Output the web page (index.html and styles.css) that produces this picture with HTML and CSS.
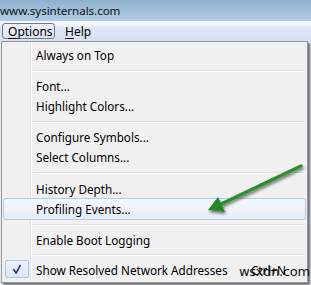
FILE: index.html
```html
<!DOCTYPE html>
<html>
<head>
<meta charset="utf-8">
<link rel="stylesheet" href="styles.css">
</head>
<body>
<div class="window">
  <div class="titlebar"><span class="title">www.sysinternals.com</span></div>
  <div class="menubar">
    <span class="menu-btn open"><u>O</u>ptions</span>
    <span class="menu-btn"><u>H</u>elp</span>
  </div>
  <div class="dropdown">
    <div class="item">Always on Top</div>
    <div class="sep"></div>
    <div class="item">Font...</div>
    <div class="item">Highlight Colors...</div>
    <div class="sep"></div>
    <div class="item">Configure Symbols...</div>
    <div class="item">Select Columns...</div>
    <div class="sep"></div>
    <div class="item">History Depth...</div>
    <div class="item hot">Profiling Events...</div>
    <div class="sep"></div>
    <div class="item">Enable Boot Logging</div>
    <div class="sep last"></div>
    <div class="item checked">
      <span class="check"><svg width="24" height="17" viewBox="0 0 24 17"><path d="M8.5 8.5 L11 12.5 L15.5 4" fill="none" stroke="#1c2a78" stroke-width="1.6" stroke-linecap="round" stroke-linejoin="round"/></svg></span>
      <span class="label">Show Resolved Network Addresses</span>
      <span class="accel">Ctrl+N</span>
    </div>
  </div>
  <svg class="arrow" width="311" height="285" viewBox="0 0 311 285">
    <defs>
      <filter id="sh" x="-20%" y="-20%" width="140%" height="160%">
        <feGaussianBlur in="SourceAlpha" stdDeviation="1.5"/>
        <feOffset dx="1" dy="2" result="b"/>
        <feComponentTransfer><feFuncA type="linear" slope="0.55"/></feComponentTransfer>
        <feMerge><feMergeNode/><feMergeNode in="SourceGraphic"/></feMerge>
      </filter>
    </defs>
    <g filter="url(#sh)">
      <line x1="301" y1="166" x2="219" y2="205" stroke="#2d8f2d" stroke-width="3.5" stroke-linecap="round"/>
      <polygon points="208,210 218,197 225,212" fill="#248a24"/>
    </g>
  </svg>
  <div class="watermark">wsxdn.com</div>
</div>
</body>
</html>
```
FILE: styles.css
```css
html, body {
  margin: 0;
  padding: 0;
}
body {
  width: 311px;
  height: 285px;
  overflow: hidden;
  background: #f0f0f0;
  font-family: "Noto Sans", "Open Sans", sans-serif;
  font-size: 11.7px;
  color: #000;
}
.window {
  position: relative;
  width: 311px;
  height: 285px;
  overflow: hidden;
  background: #e9ecf4;
}
.titlebar {
  height: 21px;
  background: linear-gradient(#8fb0cf, #b3cde6);
  display: flex;
  align-items: center;
}
.title {
  font-size: 11.6px;
  color: #111;
  padding-left: 0;
  letter-spacing: -0.05px;
}
.menubar {
  height: 20px;
  background: linear-gradient(#f7fafe 0, #eef3fb 5px, #dfe5f4 6px, #d9e0f2 100%);
  display: flex;
  align-items: flex-start;
  padding-left: 2px;
  padding-top: 2px;
  box-sizing: border-box;
  gap: 4px;
}
.menu-btn {
  height: 16px;
  line-height: 15px;
  padding: 0 6px 0 5px;
  box-sizing: border-box;
  border: 1px solid transparent;
  font-size: 12px;
}
.menu-btn.open {
  border-color: #6d7b8f;
  border-radius: 3px;
  background: linear-gradient(#eef1f7, #dde3ee);
  width: 53px;
  padding-left: 5px;
}
.menu-btn u {
  text-decoration-thickness: 1px;
  text-underline-offset: 2px;
}
.dropdown {
  margin-left: 1px;
  width: 307px;
  height: 242px;
  box-sizing: border-box;
  border: 1px solid #979797;
  padding: 3px 1px 2px;
  background-color: #f0f0f0;
  background-image: linear-gradient(to right, transparent 28px, #e2e3e3 28px, #e2e3e3 29px, #ffffff 29px, #ffffff 30px, transparent 30px);
  box-shadow: 2px 2px 2px rgba(0, 0, 0, 0.55);
  display: flex;
  flex-direction: column;
}
.item {
  height: 20px;
  line-height: 20px;
  padding-left: 33px;
  display: flex;
  align-items: center;
  box-sizing: border-box;
  white-space: nowrap;
}
.sep {
  height: 12px;
  margin-left: 30px;
  margin-right: 2px;
  background: linear-gradient(transparent 5px, #e0e0e0 5px, #e0e0e0 6px, #ffffff 6px, #ffffff 7px, transparent 7px);
}
.sep.last {
  height: 10px;
  background: linear-gradient(transparent 4px, #e0e0e0 4px, #e0e0e0 5px, #ffffff 5px, #ffffff 6px, transparent 6px);
}
.item.hot {
  margin: -1px 0;
  height: 22px;
  border: 1px solid #aecbea;
  border-radius: 3px;
  background: linear-gradient(#f5f8fd, #e6edf8);
  padding-left: 32px;
}
.item.checked {
  position: relative;
  margin-top: 1px;
}
.check {
  position: absolute;
  left: 2px;
  top: 0;
  width: 22px;
  height: 16px;
  border: 1px solid #aac5e4;
  border-radius: 2px;
  background: linear-gradient(#eef3fb, #dce7f6);
  display: flex;
  align-items: center;
  justify-content: center;
}
.check svg {
  display: block;
}
.label {
  flex: 1;
}
.accel {
  padding-right: 20px;
}
.arrow {
  position: absolute;
  left: 0;
  top: 0;
  pointer-events: none;
}
.watermark {
  position: absolute;
  left: 239px;
  top: 264px;
  font-family: "DejaVu Sans", sans-serif;
  font-size: 13px;
  color: #111;
  letter-spacing: -0.3px;
}
```
